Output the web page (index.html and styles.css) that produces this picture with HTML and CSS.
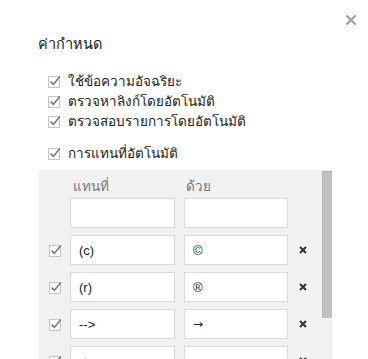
FILE: index.html
```html
<!DOCTYPE html>
<html lang="th">
<head>
    <meta charset="UTF-8">
    <title>ค่ากำหนด</title>
    <link rel="stylesheet" href="styles.css">
</head>
<body>
    <div class="dialog">
        <button class="close-button" title="ปิด">
            <svg width="12" height="12" viewBox="0 0 12 12"><path d="M1.5 1.5 L10.5 10.5 M10.5 1.5 L1.5 10.5" stroke="#a0a0a0" stroke-width="2.4" fill="none"/></svg>
        </button>

        <h1 class="dialog-title">ค่ากำหนด</h1>

        <ul class="options">
            <li class="option"><span class="check"></span>ใช้ข้อความอัจฉริยะ</li>
            <li class="option"><span class="check"></span>ตรวจหาลิงก์โดยอัตโนมัติ</li>
            <li class="option"><span class="check"></span>ตรวจสอบรายการโดยอัตโนมัติ</li>
        </ul>

        <ul class="options options-replace">
            <li class="option"><span class="check"></span>การแทนที่อัตโนมัติ</li>
        </ul>

        <div class="replace-panel">
            <div class="replace-list">
                <div class="replace-row replace-head">
                    <span></span>
                    <span class="col-head">แทนที่</span>
                    <span class="col-head">ด้วย</span>
                    <span></span>
                </div>

                <div class="replace-rows">
                    <span></span>
                    <input type="text" class="field">
                    <input type="text" class="field">
                    <span></span>

                    <span class="check"></span>
                    <input type="text" class="field" value="(c)">
                    <input type="text" class="field" value="©">
                    <span class="remove"></span>

                    <span class="check"></span>
                    <input type="text" class="field" value="(r)">
                    <input type="text" class="field" value="®">
                    <span class="remove"></span>

                    <span class="check"></span>
                    <input type="text" class="field" value="-->">
                    <input type="text" class="field field-symbol" value="→">
                    <span class="remove"></span>

                    <span class="check"></span>
                    <input type="text" class="field" value="<--">
                    <input type="text" class="field field-symbol" value="←">
                    <span class="remove"></span>

                    <span class="check"></span>
                    <input type="text" class="field" value="!=">
                    <input type="text" class="field field-symbol" value="≠">
                    <span class="remove"></span>
                </div>
            </div>

            <div class="scrollbar">
                <div class="scrollbar-thumb"></div>
            </div>
        </div>
    </div>
</body>
</html>
```

FILE: styles.css
```css
* {
    margin: 0;
    padding: 0;
    box-sizing: border-box;
}

body {
    font-family: Tahoma, "Liberation Sans", Arial, sans-serif;
    font-size: 13.5px;
    color: #222;
    background-color: #fff;
    overflow: hidden;
}

.dialog {
    position: relative;
    padding: 33px 0 0 38px;
}

.close-button {
    position: absolute;
    top: 14px;
    right: 11px;
    width: 12px;
    height: 12px;
    border: none;
    background: none;
    cursor: pointer;
    display: flex;
}

.dialog-title {
    font-size: 14.5px;
    font-weight: normal;
    line-height: 22px;
    color: #222;
}

.options {
    list-style: none;
    margin-top: 16px;
    padding-left: 10px;
}

.options-replace {
    margin-top: 12px;
}

.option {
    display: flex;
    align-items: center;
    height: 20px;
    gap: 7px;
}

/* gray google-style checkbox with the tick poking out of the box */
.check {
    width: 13px;
    height: 13px;
    flex-shrink: 0;
    background-image: url("data:image/svg+xml;utf8,<svg xmlns='http://www.w3.org/2000/svg' width='13' height='13' viewBox='0 0 13 13'><rect x='0.5' y='1.5' width='11' height='11' fill='white' stroke='%23c4c4c4'/><path d='M2.6 6.6 L5.4 9.4 L11.8 1.6' stroke='%23777' stroke-width='1.6' fill='none'/></svg>");
}

.replace-panel {
    display: flex;
    justify-content: space-between;
    margin-top: 7px;
    margin-left: 1px;
    width: 293px;
    height: 240px;
    background-color: #f1f1f1;
    overflow: hidden;
}

.replace-list {
    padding: 7px 0 0 10px;
}

.replace-head,
.replace-rows {
    display: grid;
    grid-template-columns: 13px 105px 105px 10px;
    column-gap: 8px;
    align-items: center;
}

.replace-head {
    margin-bottom: 1px;
}

.replace-rows {
    row-gap: 7px;
}

.col-head {
    color: #777;
    line-height: 20px;
    padding-left: 3px;
}

.field {
    height: 30px;
    border: 1px solid #d9d9d9;
    background-color: #fff;
    padding: 0 8px;
    font-family: "Liberation Sans", Arial, sans-serif;
    font-size: 13px;
    color: #222;
    outline: none;
}

.field-symbol {
    font-family: "DejaVu Sans", sans-serif;
    font-size: 12px;
}

.replace-rows .field:nth-child(4n + 3) {
    margin-left: 1px;
}

.remove {
    width: 8px;
    height: 8px;
    margin-left: 3px;
    background-image: url("data:image/svg+xml;utf8,<svg xmlns='http://www.w3.org/2000/svg' width='8' height='8' viewBox='0 0 8 8'><path d='M1 1 L7 7 M7 1 L1 7' stroke='%23333' stroke-width='2' fill='none'/></svg>");
}

.scrollbar {
    width: 10px;
    padding-top: 1px;
}

.scrollbar-thumb {
    height: 147px;
    background-color: #c1c1c1;
    border-top: 1px solid #b0b0b0;
    border-left: 1px solid #b8b8b8;
}
```
